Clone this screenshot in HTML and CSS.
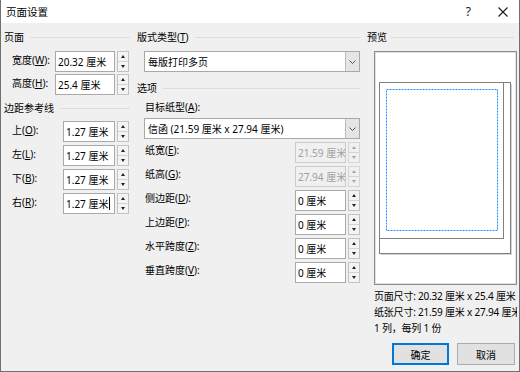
FILE: index.html
```html
<!DOCTYPE html>
<html lang="zh-CN">
<head>
    <meta charset="UTF-8">
    <title>页面设置</title>
    <link rel="stylesheet" href="styles.css">
</head>
<body>
    <div class="dialog">
        <div class="titlebar">
            <span class="title">页面设置</span>
            <span class="help">?</span>
            <svg class="close" width="10" height="10" viewBox="0 0 10 10">
                <path d="M0.5 0.5 L9.5 9.5 M9.5 0.5 L0.5 9.5" stroke="#1a1a1a" stroke-width="1.1" fill="none"/>
            </svg>
        </div>

        <div class="content">
            <!-- 页面 / 边距参考线 -->
            <div class="col col-left">
                <div class="group-title">页面</div>
                <div class="field size-field first">
                    <label>宽度(<u>W</u>):</label>
                    <div class="num">20.32 厘米</div>
                    <div class="spin"><span class="up"></span><span class="down"></span></div>
                </div>
                <div class="field size-field second">
                    <label>高度(<u>H</u>):</label>
                    <div class="num">25.4 厘米</div>
                    <div class="spin"><span class="up"></span><span class="down"></span></div>
                </div>

                <div class="group-title margin-title">边距参考线</div>
                <div class="field margin-field first">
                    <label>上(<u>O</u>):</label>
                    <div class="num">1.27 厘米</div>
                    <div class="spin"><span class="up"></span><span class="down"></span></div>
                </div>
                <div class="field margin-field">
                    <label>左(<u>L</u>):</label>
                    <div class="num">1.27 厘米</div>
                    <div class="spin"><span class="up"></span><span class="down"></span></div>
                </div>
                <div class="field margin-field">
                    <label>下(<u>B</u>):</label>
                    <div class="num">1.27 厘米</div>
                    <div class="spin"><span class="up"></span><span class="down"></span></div>
                </div>
                <div class="field margin-field">
                    <label>右(<u>R</u>):</label>
                    <div class="num">1.27 厘米<span class="caret"></span></div>
                    <div class="spin"><span class="up"></span><span class="down"></span></div>
                </div>
            </div>

            <!-- 版式类型 / 选项 -->
            <div class="col col-mid">
                <div class="group-title">版式类型(<u>T</u>)</div>
                <div class="select first">
                    <div class="select-text">每版打印多页</div>
                    <div class="select-btn">
                        <svg width="7" height="4" viewBox="0 0 7 4"><path d="M0.5 0.5 L3.5 3.5 L6.5 0.5" stroke="#555" fill="none"/></svg>
                    </div>
                </div>

                <div class="group-title options-title">选项</div>
                <div class="sub-label">目标纸型(<u>A</u>):</div>
                <div class="select paper">
                    <div class="select-text">信函 (21.59 厘米 x 27.94 厘米)</div>
                    <div class="select-btn">
                        <svg width="7" height="4" viewBox="0 0 7 4"><path d="M0.5 0.5 L3.5 3.5 L6.5 0.5" stroke="#555" fill="none"/></svg>
                    </div>
                </div>

                <div class="field opt-field disabled first">
                    <label>纸宽(<u>E</u>):</label>
                    <div class="num">21.59 厘米</div>
                    <div class="spin"><span class="up"></span><span class="down"></span></div>
                </div>
                <div class="field opt-field disabled">
                    <label>纸高(<u>G</u>):</label>
                    <div class="num">27.94 厘米</div>
                    <div class="spin"><span class="up"></span><span class="down"></span></div>
                </div>
                <div class="field opt-field">
                    <label>侧边距(<u>D</u>):</label>
                    <div class="num">0 厘米</div>
                    <div class="spin"><span class="up"></span><span class="down"></span></div>
                </div>
                <div class="field opt-field">
                    <label>上边距(<u>P</u>):</label>
                    <div class="num">0 厘米</div>
                    <div class="spin"><span class="up"></span><span class="down"></span></div>
                </div>
                <div class="field opt-field">
                    <label>水平跨度(<u>Z</u>):</label>
                    <div class="num">0 厘米</div>
                    <div class="spin"><span class="up"></span><span class="down"></span></div>
                </div>
                <div class="field opt-field">
                    <label>垂直跨度(<u>V</u>):</label>
                    <div class="num">0 厘米</div>
                    <div class="spin"><span class="up"></span><span class="down"></span></div>
                </div>
            </div>

            <!-- 预览 -->
            <div class="col col-right">
                <div class="group-title preview-title">预览</div>
                <svg class="preview" width="143" height="234" viewBox="0 0 143 234">
                    <rect x="0.5" y="0.5" width="142" height="233" fill="#fff" stroke="#8c8c8c"/>
                    <rect x="1.5" y="1.5" width="140" height="231" fill="none" stroke="#e2e2e2"/>
                    <rect x="7" y="33" width="131" height="171" fill="#d4d4d4"/>
                    <rect x="5.5" y="31.5" width="131" height="171" fill="#fff" stroke="#808080"/>
                    <rect x="5.5" y="31.5" width="124" height="156" fill="#fff" stroke="#808080"/>
                    <rect x="12.5" y="38.5" width="111" height="141" fill="none" stroke="#1e90ff" stroke-dasharray="2 1"/>
                </svg>
                <div class="info">
                    <div>页面尺寸: 20.32 厘米 x 25.4 厘米</div>
                    <div>纸张尺寸: 21.59 厘米 x 27.94 厘米</div>
                    <div>1 列，每列 1 份</div>
                </div>
                <div class="buttons">
                    <button class="btn btn-default">确定</button>
                    <button class="btn">取消</button>
                </div>
            </div>
        </div>
    </div>
</body>
</html>
```

FILE: styles.css
```css
body {
    margin: 0;
    padding: 0;
    font-family: "Noto Sans", "Noto Sans CJK SC", sans-serif;
    font-size: 10px;
    color: #000;
}

.dialog {
    width: 520px;
    height: 372px;
    box-sizing: border-box;
    background-color: #f0f0f0;
    border: 1px solid #707070;
    border-top: none;
    overflow: hidden;
}

/* Title bar */
.titlebar {
    height: 23px;
    background-color: #fff;
    display: flex;
    align-items: center;
}

.title {
    padding-left: 5px;
    font-size: 10.5px;
    flex: 1;
}

.help {
    font-size: 12px;
    margin-right: 27px;
    color: #1a1a1a;
}

.close {
    margin-right: 11px;
}

/* Columns */
.content {
    display: flex;
    padding: 7px 0 0 3px;
    line-height: 14px;
}

.col-left {
    width: 126px;
}

.col-mid {
    width: 223px;
    margin-left: 7px;
}

.col-right {
    width: 150px;
    margin-left: 7px;
}

.group-title {
    display: flex;
    align-items: center;
    height: 14px;
    white-space: nowrap;
}

.group-title::after {
    content: "";
    flex: 1;
    height: 1px;
    background-color: #dcdcdc;
    margin-left: 6px;
}

.margin-title {
    margin-top: 6px;
}

.options-title {
    margin-top: 9px;
}

.preview-title::after {
    margin-left: 4px;
    margin-right: 3px;
}

/* Fields */
.field {
    display: flex;
    height: 21px;
    margin-top: 3px;
}

.field label {
    box-sizing: border-box;
    padding: 2px 0 0 8px;
    white-space: nowrap;
}

.size-field label {
    width: 51px;
}

.size-field.first {
    margin-top: 7px;
}

.size-field.second {
    margin-top: 2px;
}

.margin-field label {
    width: 59px;
}

.margin-field.first {
    margin-top: 6px;
}

.opt-field label {
    flex: 1;
    padding-top: 1px;
}

.opt-field.first {
    margin-top: 3px;
}

.num {
    height: 21px;
    box-sizing: border-box;
    border: 1px solid #a9a9a9;
    background-color: #fff;
    padding-left: 2px;
    display: flex;
    align-items: center;
    white-space: nowrap;
    overflow: hidden;
}

.size-field .num {
    width: 60px;
}

.margin-field .num {
    width: 52px;
}

.opt-field .num {
    width: 51px;
}

.caret {
    display: inline-block;
    width: 1px;
    height: 13px;
    margin-left: 1px;
    background-color: #000;
}

.spin {
    width: 12px;
    height: 21px;
    margin-left: 2px;
    box-sizing: border-box;
    border: 1px solid #c2c2c2;
    background-color: #f4f4f4;
    display: flex;
    flex-direction: column;
}

.spin span {
    flex: 1;
    display: flex;
    align-items: center;
    justify-content: center;
}

.spin .up {
    border-bottom: 1px solid #d4d4d4;
}

.spin .up::before {
    content: "";
    border-left: 2.5px solid transparent;
    border-right: 2.5px solid transparent;
    border-bottom: 3px solid #222;
}

.spin .down::before {
    content: "";
    border-left: 2.5px solid transparent;
    border-right: 2.5px solid transparent;
    border-top: 3px solid #222;
}

.disabled .num {
    background-color: #f0f0f0;
    border-color: #cccccc;
    color: #a0a0a0;
}

.disabled .spin {
    border-color: #d6d6d6;
    background-color: #f0f0f0;
}

.disabled .spin .up::before {
    border-bottom-color: #a6a6a6;
}

.disabled .spin .down::before {
    border-top-color: #a6a6a6;
}

/* Select boxes */
.select {
    margin-left: 7px;
    width: 216px;
    height: 21px;
    box-sizing: border-box;
    border: 1px solid #a9a9a9;
    background-color: #fff;
    display: flex;
}

.select.first {
    margin-top: 7px;
}

.select.paper {
    margin-top: 4px;
}

.select-text {
    flex: 1;
    padding-left: 3px;
    display: flex;
    align-items: center;
    white-space: nowrap;
}

.select-btn {
    width: 13px;
    border-left: 1px solid #bdbdbd;
    background-color: #e5e5e5;
    display: flex;
    align-items: center;
    justify-content: center;
}

.sub-label {
    margin-top: 5px;
    padding-left: 8px;
}

/* Preview */
.preview {
    display: block;
    margin: 7px 0 0 7px;
}

.info {
    margin-top: 3px;
    padding-left: 7px;
    line-height: 16px;
    letter-spacing: -0.2px;
    white-space: nowrap;
    overflow: hidden;
}

.buttons {
    display: flex;
    justify-content: flex-end;
    gap: 8px;
    margin: 7px 2px 0 0;
}

.btn {
    width: 58px;
    height: 22px;
    box-sizing: border-box;
    border: 1px solid #adadad;
    background-color: #e1e1e1;
    font-family: "Noto Sans", "Noto Sans CJK SC", sans-serif;
    font-size: 10px;
    padding: 0;
    color: #000;
}

.btn-default {
    width: 57px;
    border-color: #0078d7;
    box-shadow: inset 0 0 0 1px #0078d7;
}
```
